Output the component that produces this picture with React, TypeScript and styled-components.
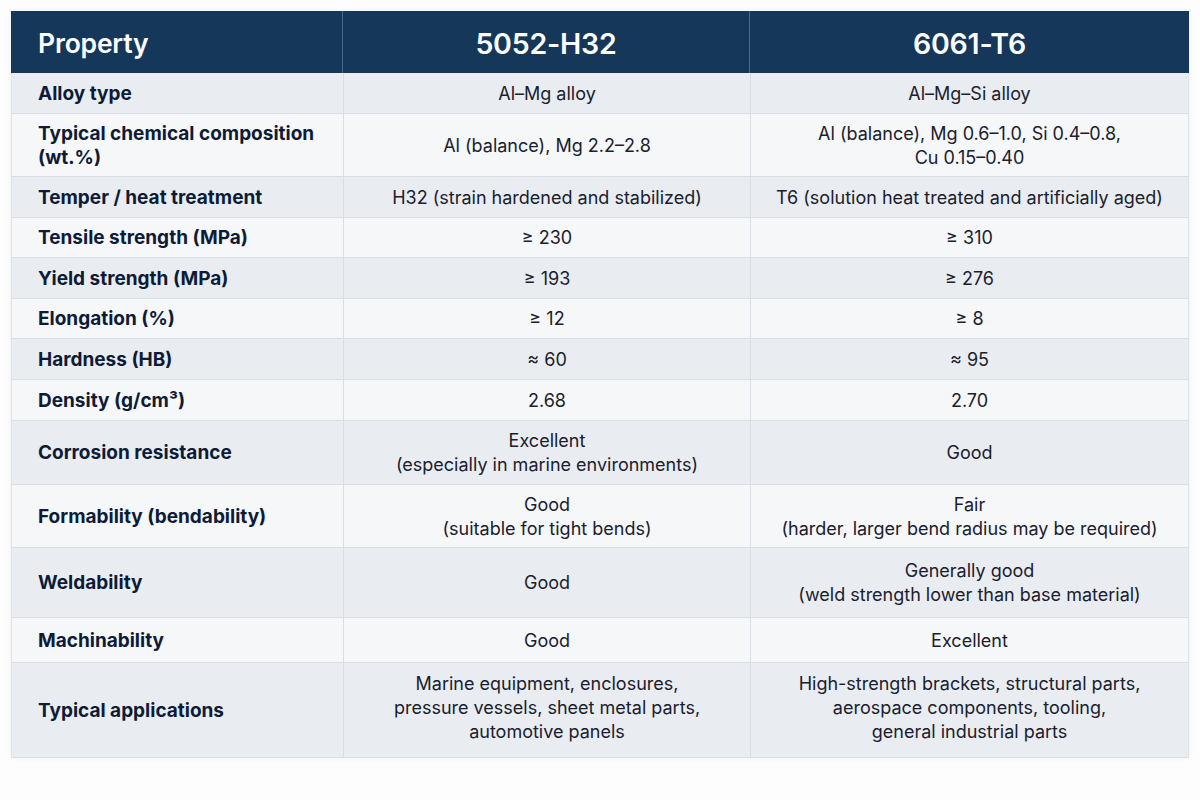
import React from "react";
import styled, { createGlobalStyle } from "styled-components";

const Global = createGlobalStyle`
  html, body { margin: 0; padding: 0; background: #fdfdfd; }
  body { font-family: Inter, "Noto Sans", "Liberation Sans", sans-serif; }
`;

const Page = styled.div`
  width: 1200px;
  height: 800px;
  padding: 11px 11px 0 11px;
  box-sizing: border-box;
  background: #fdfdfd;
`;

const Table = styled.div`
  width: 1178px;
  display: flex;
  flex-direction: column;
  box-shadow: 0 0 6px rgba(20, 40, 70, 0.06);
`;

const HeaderRow = styled.div`
  display: grid;
  grid-template-columns: 332px 407px 1fr;
  height: 62px;
  background: #15375a;
  color: #ffffff;
`;

const HeadCell = styled.div<{ $left?: boolean; $last?: boolean }>`
  display: flex;
  align-items: center;
  justify-content: ${(p) => (p.$left ? "flex-start" : "center")};
  padding-left: ${(p) => (p.$left ? "27px" : "0")};
  padding-top: 2px;
  font-size: ${(p) => (p.$left ? "26.5px" : "28.5px")};
  font-weight: 600;
  letter-spacing: -0.2px;
  border-right: ${(p) => (p.$last ? "none" : "1px solid #4b6685")};
`;

const Row = styled.div<{ $h: number; $alt: boolean }>`
  display: grid;
  grid-template-columns: 332px 407px 1fr;
  height: ${(p) => p.$h}px;
  box-sizing: border-box;
  background: ${(p) => (p.$alt ? "#e9edf1" : "#f5f7f9")};
  border-bottom: 1px solid #d9dee4;
  border-left: 1px solid #dfe3e8;
  border-right: 1px solid #dfe3e8;
`;

const Label = styled.div`
  display: flex;
  align-items: center;
  padding-left: 26px;
  padding-right: 10px;
  padding-top: 1px;
  font-size: 19px;
  font-weight: 700;
  line-height: 24px;
  color: #0e1b37;
  border-right: 1px solid #d9dee4;
`;

const Value = styled.div<{ $last?: boolean; $lift?: boolean }>`
  display: flex;
  align-items: center;
  justify-content: center;
  text-align: center;
  padding-top: ${(p) => (p.$lift ? "0" : "1px")};
  padding-bottom: ${(p) => (p.$lift ? "5px" : "0")};
  font-size: 18px;
  font-weight: 400;
  line-height: 24px;
  color: #1a202e;
  border-right: ${(p) => (p.$last ? "none" : "1px solid #d9dee4")};
  white-space: pre-line;
`;

const LabelText = styled.span`
  white-space: pre-line;
`;

const rows: { label: string; a: string; b: string; h: number; lift?: boolean }[] = [
  { label: "Alloy type", a: "Al–Mg alloy", b: "Al–Mg–Si alloy", h: 41 },
  {
    label: "Typical chemical composition\n(wt.%)",
    a: "Al (balance), Mg 2.2–2.8",
    b: "Al (balance), Mg 0.6–1.0, Si 0.4–0.8,\nCu 0.15–0.40",
    h: 63,
  },
  {
    label: "Temper / heat treatment",
    a: "H32 (strain hardened and stabilized)",
    b: "T6 (solution heat treated and artificially aged)",
    h: 41,
  },
  { label: "Tensile strength (MPa)", a: "≥ 230", b: "≥ 310", h: 40 },
  { label: "Yield strength (MPa)", a: "≥ 193", b: "≥ 276", h: 41 },
  { label: "Elongation (%)", a: "≥ 12", b: "≥ 8", h: 40 },
  { label: "Hardness (HB)", a: "≈ 60", b: "≈ 95", h: 41 },
  { label: "Density (g/cm³)", a: "2.68", b: "2.70", h: 41 },
  {
    label: "Corrosion resistance",
    a: "Excellent\n(especially in marine environments)",
    b: "Good",
    h: 64,
  },
  {
    label: "Formability (bendability)",
    a: "Good\n(suitable for tight bends)",
    b: "Fair\n(harder, larger bend radius may be required)",
    h: 63,
  },
  {
    label: "Weldability",
    a: "Good",
    b: "Generally good\n(weld strength lower than base material)",
    h: 70,
  },
  { label: "Machinability", a: "Good", b: "Excellent", h: 45 },
  {
    label: "Typical applications",
    a: "Marine equipment, enclosures,\npressure vessels, sheet metal parts,\nautomotive panels",
    b: "High-strength brackets, structural parts,\naerospace components, tooling,\ngeneral industrial parts",
    h: 95,
    lift: true,
  },
];

export default function App() {
  return (
    <Page>
      <Global />
      <Table>
        <HeaderRow>
          <HeadCell $left>Property</HeadCell>
          <HeadCell>5052-H32</HeadCell>
          <HeadCell $last>6061-T6</HeadCell>
        </HeaderRow>
        {rows.map((r, i) => (
          <Row key={r.label} $h={r.h} $alt={i % 2 === 0}>
            <Label>
              <LabelText>{r.label}</LabelText>
            </Label>
            <Value $lift={r.lift}>{r.a}</Value>
            <Value $last $lift={r.lift}>
              {r.b}
            </Value>
          </Row>
        ))}
      </Table>
    </Page>
  );
}
